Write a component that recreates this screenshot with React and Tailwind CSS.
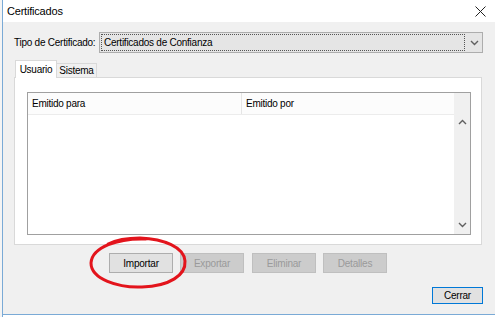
import React from "react";

const font = { fontFamily: '"Liberation Sans", Arial, sans-serif' };

function Chevron({ up = false, className = "" }) {
  return (
    <svg width="9" height="6" viewBox="0 0 9 6" className={className}>
      <path
        d={up ? "M1 5 L4.5 1.5 L8 5" : "M1 1 L4.5 4.5 L8 1"}
        fill="none"
        stroke="#606060"
        strokeWidth="1.4"
      />
    </svg>
  );
}

function Button({ children, disabled, className = "" }) {
  return (
    <div
      className={
        "h-[20px] w-[64px] flex items-center justify-center border text-[10px] tracking-[-0.2px] " +
        (disabled
          ? "bg-[#cccccc] border-[#bfbfbf] text-[#9a9a9a]"
          : "bg-[#e1e1e1] border-[#adadad] text-black") +
        " " +
        className
      }
    >
      {children}
    </div>
  );
}

export default function App() {
  return (
    <div className="w-[495px] h-[317px] flex bg-white overflow-hidden" style={font}>
      {/* window behind */}
      <div className="w-[2px] bg-[#f4f4f4]" />

      <div className="flex-1 flex flex-col border-l border-[#7aaad6]">
        {/* title bar */}
        <div className="h-[22px] bg-white flex items-center justify-between pl-[4px] pr-[9px] shrink-0">
          <span className="text-[11px] tracking-[-0.2px] text-black leading-none">Certificados</span>
          <svg width="11" height="11" viewBox="0 0 11 11">
            <path d="M0.5 0.5 L10.5 10.5 M10.5 0.5 L0.5 10.5" stroke="#222" strokeWidth="1" />
          </svg>
        </div>

        {/* body */}
        <div className="relative h-[292px] bg-[#f0f0f0] flex flex-col shrink-0 text-[10px] tracking-[-0.25px] text-black">
          {/* type row */}
          <div className="flex items-center mt-[10px] pl-[11px]">
            <span className="w-[85px] whitespace-nowrap">Tipo de Certificado:</span>
            <div className="w-[384px] h-[21px] flex bg-[#e5e5e5] border border-[#adadad]">
              <div className="flex-1 m-[1px] border border-dotted border-[#555] flex items-center pl-[2px]">
                Certificados de Confianza
              </div>
              <div className="w-[16px] flex items-center justify-center">
                <Chevron />
              </div>
            </div>
          </div>

          {/* tabs */}
          <div className="flex items-end mt-[6px] ml-[12px] h-[18px]">
            <div className="h-[18px] w-[42px] bg-white border border-b-0 border-[#d9d9d9] flex items-center justify-center relative z-10 -mb-px">
              Usuario
            </div>
            <div className="h-[14px] w-[40px] bg-[#f0f0f0] border border-b-0 border-l-0 border-[#d9d9d9] flex items-center justify-center">
              Sistema
            </div>
          </div>

          {/* tab panel */}
          <div className="ml-[11px] w-[468px] h-[168px] bg-white border border-[#d9d9d9] pt-[14px] pl-[12px]">
            <div className="w-[444px] h-[143px] border border-[#a0a0a0] flex">
              <div className="flex-1 flex flex-col">
                <div className="h-[22px] flex bg-[#fcfcfc] border-b border-[#ececec]">
                  <div className="w-[214px] border-r border-[#e5e5e5] flex items-center pl-[4px]">
                    Emitido para
                  </div>
                  <div className="flex-1 flex items-center pl-[4px]">Emitido por</div>
                </div>
                <div className="flex-1 bg-white" />
              </div>
              <div className="w-[16px] bg-[#f0f0f0] flex flex-col items-center justify-between pt-[26px] pb-[6px]">
                <Chevron up />
                <Chevron />
              </div>
            </div>
          </div>

          {/* action buttons */}
          <div className="flex mt-[8px] ml-[106px]">
            <Button>Importar</Button>
            <Button disabled className="ml-[7px]">Exportar</Button>
            <Button disabled className="ml-[8px]">Eliminar</Button>
            <Button disabled className="ml-[7px]">Detalles</Button>
          </div>

          {/* close */}
          <div className="flex justify-end mt-[14px] pr-[12px]">
            <div className="w-[51px] h-[17px] bg-[#e1e1e1] border border-[#0078d7] flex items-center justify-center">
              Cerrar
            </div>
          </div>

          {/* red annotation */}
          <svg
            className="absolute left-[85px] top-[213px]"
            width="102"
            height="56"
            viewBox="0 0 102 56"
          >
            <path
              d="M58 4 C 30 3, 4 12, 3 28 C 3 44, 30 53, 54 52 C 82 51, 98 40, 97 26 C 96 12, 76 4, 52 3 C 40 3, 28 5, 20 9"
              fill="none"
              stroke="#e3141c"
              strokeWidth="3"
              strokeLinecap="round"
            />
          </svg>
        </div>

        {/* bottom border */}
        <div className="h-[1px] bg-[#7aaad6] shrink-0" />
        <div className="flex-1 bg-white" />
      </div>
    </div>
  );
}
